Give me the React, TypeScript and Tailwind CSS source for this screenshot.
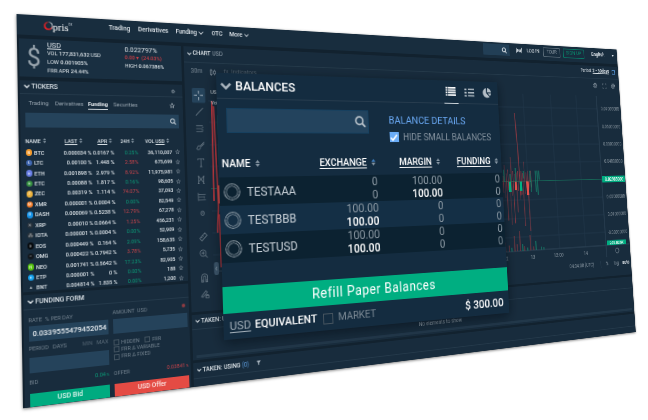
import React from "react";

type Pt = [number, number];

/* Projects a w x h box onto an arbitrary quad (top-left, top-right, bottom-right, bottom-left). */
function project(w: number, h: number, [p0, p1, p2, p3]: Pt[]) {
  const dx1 = p1[0] - p2[0], dx2 = p3[0] - p2[0], sx = p0[0] - p1[0] + p2[0] - p3[0];
  const dy1 = p1[1] - p2[1], dy2 = p3[1] - p2[1], sy = p0[1] - p1[1] + p2[1] - p3[1];
  const den = dx1 * dy2 - dx2 * dy1;
  const g = (sx * dy2 - dx2 * sy) / den;
  const k = (dx1 * sy - sx * dy1) / den;
  const a = p1[0] - p0[0] + g * p1[0], b = p3[0] - p0[0] + k * p3[0];
  const d = p1[1] - p0[1] + g * p1[1], e = p3[1] - p0[1] + k * p3[1];
  const m = [a / w, d / w, 0, g / w, b / h, e / h, 0, k / h, 0, 0, 1, 0, p0[0], p0[1], 0, 1];
  return { transform: `matrix3d(${m.map((n) => n.toFixed(9)).join(",")})` };
}

const BOARD: Pt[] = [[16.5, 14], [616.5, 49.5], [635.7, 332], [23, 408.3]];
const MODAL: Pt[] = [[216, 72.7], [497, 82.3], [509.3, 312.7], [224, 340.2]];

const Chevron = ({ className = "" }: { className?: string }) => (
  <svg viewBox="0 0 12 8" className={className} fill="none" stroke="currentColor" strokeWidth="2.6">
    <path d="M1 1.5 6 6.5 11 1.5" />
  </svg>
);

const Thin = () => (
  <svg viewBox="0 0 12 8" className="ml-[2px] h-[4px] w-[6px]" fill="none" stroke="currentColor" strokeWidth="1.8">
    <path d="M1 1.5 6 6.5 11 1.5" />
  </svg>
);

const Sort = ({ className = "h-[5px] w-[3.5px]", up = "currentColor" }: { className?: string; up?: string }) => (
  <svg viewBox="0 0 8 12" className={`shrink-0 text-[#8797a4] ${className}`}>
    <path d="M4 0 8 5H0Z" fill={up} />
    <path d="M4 12 0 7h8Z" fill="currentColor" />
  </svg>
);

const Search = ({ className = "" }: { className?: string }) => (
  <svg viewBox="0 0 12 12" className={className} fill="none" stroke="currentColor" strokeWidth="1.7">
    <circle cx="5" cy="5" r="3.9" />
    <path d="m8 8 3.4 3.4" strokeWidth="2" />
  </svg>
);

const Star = ({ className = "" }: { className?: string }) => (
  <svg viewBox="0 0 12 12" className={className} fill="none" stroke="currentColor" strokeWidth="1.1">
    <path d="m6 1 1.5 3.3 3.5.4-2.6 2.4.7 3.6L6 8.9l-3.1 1.8.7-3.6L1 4.7l3.5-.4Z" />
  </svg>
);

const Gear = ({ className = "" }: { className?: string }) => (
  <svg viewBox="0 0 12 12" className={className} fill="none" stroke="currentColor">
    <circle cx="6" cy="6" r="4.2" strokeWidth="1.4" strokeDasharray="2.2 1.1" />
    <circle cx="6" cy="6" r="2.3" strokeWidth="1.5" />
  </svg>
);

const coins = [
  { n: "BTC", last: "0.000034", apr: "0.0167", h: "0.25%", up: true, vol: "36,110,007", c: "#f39a2d", s: "B" },
  { n: "LTC", last: "0.00100", apr: "1.448", h: "2.58%", up: false, vol: "675,699", c: "#3f66b0", s: "Ł" },
  { n: "ETH", last: "0.001898", apr: "2.979", h: "8.92%", up: false, vol: "11,975,981", c: "#6a7fe6", s: "♦" },
  { n: "ETC", last: "0.00088", apr: "1.817", h: "0.16%", up: true, vol: "98,605", c: "#3a9544", s: "♦" },
  { n: "ZEC", last: "0.00319", apr: "1.114", h: "74.07%", up: false, vol: "37,093", c: "#eeb33c", s: "Z" },
  { n: "XMR", last: "0.000001", apr: "0.0004", h: "0.00%", up: true, vol: "82,549", c: "#f57a24", s: "M" },
  { n: "DASH", last: "0.000069", apr: "0.5238", h: "12.79%", up: false, vol: "67,278", c: "#1591e6", s: "D" },
  { n: "XRP", last: "0.00010", apr: "0.0664", h: "1.25%", up: false, vol: "456,231", c: "#25303a", s: "✕" },
  { n: "IOTA", last: "0.000001", apr: "0.0004", h: "0.00%", up: true, vol: "52,909", c: "#2a343c", s: "⁂" },
  { n: "EOS", last: "0.000449", apr: "0.164", h: "2.09%", up: true, vol: "158,635", c: "#06090c", s: "◊" },
  { n: "OMG", last: "0.000422", apr: "0.7942", h: "3.78%", up: false, vol: "5,735", c: "#11161b", s: "–" },
  { n: "NEO", last: "0.001741", apr: "0.5642", h: "17.23%", up: true, vol: "82,905", c: "#57c40f", s: "N" },
  { n: "ETP", last: "0.000001", apr: "0", h: "0.00%", up: true, vol: "188", c: "#15a3f0", s: "●" },
  { n: "BNT", last: "0.004814", apr: "1.835", h: "0.00%", up: true, vol: "1,200", c: "#182c3d", s: "▲" },
];

function TopBar() {
  return (
    <header className="flex h-[21px] shrink-0 items-center bg-[#182d3e] pb-[3px] text-[6.900px] font-medium text-[#dfe5ea]">
      <div className="ml-[27px] flex w-[68px] items-center pt-[3px]">
        <svg viewBox="0 0 16 16" className="h-[9.5px] w-[9px]">
          <path d="M8 .8a7.2 7.2 0 1 0 7.2 7.4A6.2 6.2 0 1 1 8 .8Z" fill="#e32227" stroke="#e32227" strokeWidth=".8" />
          <path d="M8 .8a7.2 7.2 0 0 1 7.2 7.2c0 2.6-1.200 4.600-3 5.900A6.600 6.600 0 0 0 8 .8Z" fill="#e9edf0" />
        </svg>
        <span className="font-['Liberation_Serif',serif] text-[11px] leading-[10px] text-white">pris</span>
        <span className="mb-[5px] text-[3px] leading-[3px] text-[#aeb9c2]">DX</span>
      </div>
      <span className="w-[32px]">Trading</span>
      <span className="w-[42.5px]">Derivatives</span>
      <span className="flex w-[42px] items-center">Funding<Thin /></span>
      <span className="w-[21.500px]">OTC</span>
      <span className="flex items-center">More<Thin /></span>
      <div className="ml-auto mt-[1px] flex h-[15px] w-[43px] items-center justify-end bg-[#223f56] pr-[4px]">
        <Search className="h-[8px] w-[9px] text-[#c8d1d8]" />
      </div>
      <svg viewBox="0 0 14 10" className="ml-[10px] h-[8px] w-[12px]" fill="none" stroke="#c8d1d8" strokeWidth="1.4">
        <path d="M1.500 1v8M4 2.500v5M4 4h2v3M8 3v4h2V3M12.500 1v8" />
      </svg>
      <span className="ml-[7px] w-[28px] whitespace-nowrap text-[7px] font-normal">LOG IN</span>
      <span className="flex h-[13px] w-[30px] items-center justify-center rounded-[1px] border border-[#5b6c79] text-[7px] font-normal text-[#93a0ab]">TOUR</span>
      <span className="ml-[5px] flex h-[13px] w-[38px] items-center justify-center rounded-[1px] border border-[#087a65] text-[7.200px] font-normal text-[#078a6c]">SIGN UP</span>
      <span className="ml-[13px] w-[38px] text-[7.500px] font-medium">English</span>
      <span className="mr-[6px] border-x-[2.500px] border-t-[3px] border-x-transparent border-t-[#dfe5ea]" />
    </header>
  );
}

function Summary() {
  return (
    <section className="flex h-[39.500px] shrink-0 bg-[#192f41] text-[5.700px] font-medium leading-[9.300px] text-[#d9e0e5]">
      <div className="ml-[8px] flex w-[20.500px] items-center text-[25px] font-normal text-[#99a5ae]">$</div>
      <div className="w-[81.500px] pt-[1px]">
        <div className="text-[7.500px] font-normal underline">USD</div>
        <div><span className="font-normal">VOL</span> 177,831,632 <span className="font-normal">USD</span></div>
        <div><span className="font-normal">LOW</span> 0.001905%</div>
        <div><span className="font-normal">FRR APR</span> 24.44%</div>
      </div>
      <div className="pt-[2px]">
        <div className="text-[7.300px] font-normal">0.022797%</div>
        <div className="font-medium text-[#cf3f46]">0.00 ▾ &nbsp;(24.03%)</div>
        <div><span className="font-normal">HIGH</span> 0.067386%</div>
      </div>
    </section>
  );
}

function Tickers() {
  const cols = "grid grid-cols-[13.500px_58.500px_24px_26px_38px_13px] items-center";
  return (
    <section className="flex h-[213px] shrink-0 flex-col overflow-hidden bg-[#182c3d] text-[5.500px] text-[#dbe2e7]">
      <div className="flex h-[14.500px] shrink-0 items-center border-b border-[#24394a] px-[4px] text-[6.700px] font-medium">
        <Chevron className="mr-[2px] h-[4px] w-[6px]" />
        TICKERS
        <Gear className="ml-auto mr-[4px] mt-[2px] h-[5px] w-[5px] text-[#9aa7b1]" />
      </div>
      <div className="flex h-[16px] shrink-0 items-center pl-[9px] pt-[1px] text-[6px] text-[#98a5b0]">
        <span className="w-[26.500px]">Trading</span>
        <span className="w-[34px]">Derivatives</span>
        <span className="mr-[6px] border-b border-[#cdd5db] pb-[1.500px] pt-[2.500px] text-[5.800px] font-bold leading-[8px] text-[#e6ebef]">Funding</span>
        <span>Securities</span>
        <Star className="ml-auto mr-[9px] h-[6px] w-[6px] text-[#b9c3cb]" />
      </div>
      <div className="mx-[5px] mt-[3px] flex h-[15px] shrink-0 items-center justify-end bg-[#25435b] pr-[3px]">
        <Search className="h-[7px] w-[7px] text-[#c8d1d8]" />
      </div>
      <div className="flex h-[20.500px] shrink-0 items-end pb-[2.500px] pl-[5px] text-[5.400px] font-medium">
        <span className="flex w-[39.500px] items-center gap-[2px]">NAME <Sort /></span>
        <span className="flex w-[34px] items-center gap-[2px]"><u>LAST</u> <Sort /></span>
        <span className="flex w-[24.500px] items-center gap-[2px]"><u>APR</u> <Sort /></span>
        <span className="flex w-[27px] items-center gap-[2px]">24H <Sort /></span>
        <span className="flex items-center gap-[2px]"><span>VOL <u>USD</u></span> <Sort /></span>
      </div>
      <div className="flex min-h-0 flex-1">
        <div className="flex-1">
          {coins.map((r) => (
            <div key={r.n} className={`${cols} h-[10.450px] text-right font-medium leading-[10px]`}>
              <span className="ml-[5px] flex h-[6.500px] w-[6.500px] items-center justify-center rounded-full text-[4px] leading-none text-white/80" style={{ background: r.c }}>{r.s}</span>
              <div className="flex justify-between"><span>{r.n}</span><span>{r.last} %</span></div>
              <span className="whitespace-nowrap">{r.apr} %</span>
              <span className={r.up ? "font-normal text-[#0b9c78]" : "font-normal text-[#c9444b]"}>{r.h}</span>
              <span>{r.vol}</span>
              <Star className="ml-[3.500px] h-[5px] w-[5px] text-[#8b98a3]" />
            </div>
          ))}
        </div>
        <div className="mr-[1px] h-[35px] w-[2px] rounded bg-[#3b4f60]" />
      </div>
    </section>
  );
}

const Box = () => <span className="mr-[2.500px] h-[6px] w-[6px] border border-[#41525f]" />;

function FundingForm() {
  return (
    <section className="flex min-h-0 flex-1 flex-col bg-[#182c3d] text-[5.700px] text-[#71808d]">
      <div className="flex h-[15px] shrink-0 items-center border-b border-[#24394a] px-[4px] text-[6.800px] font-medium text-[#dbe2e7]">
        <Chevron className="mr-[2px] h-[4px] w-[6px]" />
        FUNDING FORM
      </div>
      <div className="grid grid-cols-[80px_81px] gap-x-[5px] pl-[5px]">
        <div className="h-[16px] pt-[6.500px] leading-[7px]">RATE &nbsp;% PER DAY</div>
        <div className="flex h-[16px] justify-between pt-[6px] leading-[7px]"><span>AMOUNT &nbsp;USD</span><span className="mr-[2px] h-[4px] w-[4px] rounded-full bg-[#8d3b42]" /></div>
        <div className="flex h-[15px] items-center bg-[#25435b] pl-[4px] text-[7.500px] font-medium text-[#e8edf1]">0.0339555479452054</div>
        <div className="h-[15px] bg-[#25435b]" />
        <div>
          <div className="flex h-[15.500px] items-center gap-[4px]"><span>PERIOD</span><span>DAYS</span><span className="ml-auto text-[#4f606e]">MIN</span><span className="text-[#5a6b79]">MAX</span></div>
          <div className="h-[15px] bg-[#25435b]" />
        </div>
        <div className="pt-[5.500px] text-[5.500px] leading-[7.200px]">
          <div className="flex items-center"><Box />HIDDEN<span className="w-[5px]" /><Box />FRR</div>
          <div className="flex items-center"><Box />FRR Δ VARIABLE</div>
          <div className="flex items-center"><Box />FRR Δ FIXED</div>
        </div>
        <div className="flex h-[20px] items-center justify-between"><span>BID</span><span className="text-[#0b9c78]">0.04<span className="text-[3.500px]"> %</span></span></div>
        <div className="flex h-[20px] items-center justify-between"><span>OFFER</span><span className="text-[#c9444b]">0.03841<span className="text-[3.500px]"> %</span></span></div>
        <div className="flex h-[15px] items-center justify-center bg-[#00ab80] pb-[2px] text-[7px] font-medium text-[#e2f6ef]">USD Bid</div>
        <div className="flex h-[15px] items-center justify-center bg-[#e44b44] pb-[2px] text-[7px] font-medium text-[#fbe6e4]">USD Offer</div>
      </div>
    </section>
  );
}

const prices = ["0.07000000", "0.06000000", "0.05000000", "0.04000000", "", "0.02000000", "0.01000000", "-0.00000000"];
const dips = [190, 214, 196, 203, 232, 193, 238, 200, 236, 190, 222, 194, 206, 199, 240, 198, 190, 247, 194, 190];
const peaks = [172, 168, 174, 160, 171, 166, 172, 150, 168, 172, 170, 168, 173, 168, 171, 156, 170, 168, 172, 168];

function PriceChart() {
  return (
    <svg viewBox="204 62 618 226" className="h-[226px] w-[618px] shrink-0" fontFamily="Roboto, sans-serif">
      <g stroke="#20364a" strokeWidth="1">
        {[603, 648, 695, 740].map((x) => <path key={x} d={`M${x} 66V272`} />)}
        {[84, 108, 133, 157, 206, 230, 254].map((y) => <path key={y} d={`M204 ${y}H777`} />)}
      </g>
      <path d="M777 66V288M204 272H822" stroke="#30475a" fill="none" />
      <path d="M204 181.500H777" stroke="#176456" strokeWidth="1" />
      <g fill="none" stroke="#963a43" strokeWidth="1">
        {dips.map((y, i) => <path key={i} d={`M${602 + i * 2.700} ${peaks[i]}V${y}`} opacity={i % 3 ? 0.9 : 0.55} />)}
        <path d="M632 92 634 140 635 200" strokeWidth="1.400" opacity=".9" />
        <path d="M208 84 207 195M210 90 212 200 210 230M213 268V210" strokeWidth="1.700" stroke="#c6393f" />
        <path d="M605 272v-12M611 272v-8M620 272v-20M624 272v-9M629 272v-26M636 272v-6M646 272v-20M651 272v-5" />
      </g>
      <g stroke="#16836b" strokeWidth="1.300">
        <path d="M609 166v16M619 172v12M628 164v20M641 168v10M652 168v15M661 168v17M664 168v16M667 168v12M661 182v14M664 182v18M653 182v14M215 100v95" />
        <path d="M615 272v-5M633 272v-9M641 272v-4M655 272v-12M664 272v-4M668 272v-3" />
      </g>
      <path d="M616 182h4v13h-4ZM634 182h4v12h-4Z" fill="#00b383" />
      <path d="M626 182h3v11h-3ZM645 182h4v18h-4Z" fill="#e2504b" />
      <path d="M212 178h3v20h-3Z" fill="#e2504b" />
      <g fill="#85929c" fontSize="6.400">
        {prices.map((p, i) => <text key={i} x={i === 7 ? 782 : 784} y={86.500 + i * 24.300}>{p}</text>)}
        <g fontSize="6.800"><text x="645" y="283.500">13</text><text x="684" y="283.500">12:00</text><text x="736" y="283.500">14</text><text x="601" y="283.500">12</text></g>
      </g>
      <rect x="778" y="177" width="42" height="9" fill="#00ab80" />
      <text x="783" y="184" fontSize="6.400" fontWeight="500" fill="#fff">0.02985000</text>
      <rect x="779" y="265.500" width="35" height="6.500" fill="#00ab80" />
      <text x="784" y="271.500" fontSize="6" fontWeight="500" fill="#fff">201.826K</text>
      <circle cx="797" cy="280" r="3.200" fill="none" stroke="#7b8994" strokeWidth=".9" />
      <g fill="#dbe2e7" fontSize="6"><text x="207" y="76">USD</text><text x="207" y="88">Vol</text></g>
      <rect x="204.500" y="262" width="5.500" height="14" rx="2" fill="#3d566b" />
      <path d="m208 267-1.500 2 1.500 2" fill="none" stroke="#aab6c0" strokeWidth=".7" />
    </svg>
  );
}

const tools: [number, string][] = [
  [96.2, "M2.5 9.5 9.5 2.5M1 11l1.500-1.500M9.500 2.500 11 1"],
  [115, "M1 2h9M1 6h9M1 10h9M9 4h2M8 8h3"],
  [134, "M1 10c3 2 6-1 5-3L5 6C3 5 1 8 1 10ZM6 6l5-5M7 7l4-4"],
  [152.5, "M2 3V1h8v2M6 1v10M4.500 11h3"],
  [171, "M2 11V2l7 8M2 9 9 2M9 2v9M1 2h2M8 2h2M1 11h2M8 11h2"],
  [190, "M1 1v10M1 3h10M1 6h7M1 10h10M9 5v3"],
  [208, "M6 3.500a2.500 2.500 0 1 0 .01 0M6 5v2"],
  [233.7, "M1 8 8 1l3 3-7 7ZM5 4l1.500 1.500M3 6l1.500 1.500"],
  [252, "M5 1a4 4 0 1 0 .01 0M8 8l3 3M3 5h4M5 3v4"],
  [278, "M2 11V5a4 4 0 0 1 8 0v6H7.500V5a1.500 1.500 0 0 0-3 0v6ZM2 9h2.500M7.500 9H10"],
  [295.4, "M1 9 7 2l2 2-6 6ZM7 8h4v3H7ZM8 8V7h2v1"],
];

function ChartPanel() {
  return (
    <section className="flex h-[290.500px] shrink-0 flex-col bg-[#182c3d] text-[#dbe2e7]">
      <div className="flex h-[18px] shrink-0 items-center border-b border-[#24394a] px-[4px] text-[6.500px] font-medium">
        <Chevron className="mr-[2px] h-[4px] w-[5px]" />
        CHART <span className="ml-[2px] font-normal text-[#93a1ac]">USD</span>
        <span className="ml-auto text-[6.500px] font-normal">Period: <b className="underline">2 - 30days</b></span>
        <span className="ml-[5px] mr-[2px] h-[6px] w-[6px] border border-[#5c9de0]" />
      </div>
      <div className="flex h-[20px] shrink-0 items-center pl-[8px] text-[7px] text-[#7c8a96]">
        <span className="w-[22px]">30m</span>
        <svg viewBox="0 0 10 10" className="h-[8px] w-[8px]" fill="none" stroke="currentColor"><path d="M2 0v2M2 8v2M.7 2h2.600v6H.7ZM7 1v2M7 7v2M5.700 3h2.600v4H5.700Z" /></svg>
        <span className="ml-[9px] text-[#52626f]">ƒx &nbsp;Indicators</span>
        <Gear className="ml-auto h-[9px] w-[9px]" />
        <svg viewBox="0 0 10 10" className="ml-[8px] h-[8px] w-[9px]" fill="none" stroke="currentColor"><path d="M1 3V1h2M7 1h2v2M9 7v2H7M3 9H1V7" /></svg>
        <Gear className="ml-[7px] mr-[7px] h-[9px] w-[9px]" />
      </div>
      <div className="flex min-h-0 flex-1">
        <div className="w-[27px] shrink-0 text-[#62727f]">
          <svg viewBox="177 62 27 245" className="h-[245px] w-[27px]" fill="none" stroke="currentColor" strokeWidth="1">
            <rect x="185" y="70" width="15.500" height="16.500" rx="1.500" fill="#25435b" stroke="none" />
            <path d="M192.700 73v3.500M192.700 80v3.500M187.500 78.200h3.500M194.500 78.200h3.500" stroke="#a7b5c0" />
            {tools.map(([y, d]) => (
              <g key={y} transform={`translate(188 ${y - 5}) scale(.86)`}><path d={d} /></g>
            ))}
          </svg>
        </div>
        <div className="flex min-w-0 flex-1 flex-col">
          <PriceChart />
          <div className="flex h-[20px] items-center justify-end pr-[3px] text-[6.500px] text-[#8b98a3]">
            <span className="mr-[12px]">04:04:08 (UTC)</span>
            <span className="mr-[10px] border-l border-[#2a4053] pl-[8px]">%</span>
            <span className="mr-[7px]">log</span>
            <b className="text-[#e5eaee]">auto</b>
          </div>
        </div>
      </div>
    </section>
  );
}

function Dashboard() {
  return (
    <div className="absolute left-0 top-0 flex h-[394px] w-[822px] origin-top-left flex-col overflow-hidden bg-[#12222f] shadow-[0_1px_3px_rgba(0,0,0,0.5)]" style={project(822, 394, BOARD)}>
      <TopBar />
      <main className="mt-[3.500px] flex min-h-0 flex-1">
        <aside className="ml-[1.500px] mr-[2.500px] flex w-[173.500px] shrink-0 flex-col gap-[3.500px]">
          <Summary />
          <Tickers />
          <FundingForm />
        </aside>
        <div className="flex min-w-0 flex-1 flex-col gap-[3px]">
          <ChartPanel />
          <section className="flex h-[47.500px] shrink-0 flex-col bg-[#182c3d] text-[#dbe2e7]">
            <div className="flex h-[15.500px] shrink-0 items-center border-b border-[#24394a] px-[4px] text-[6.700px] font-medium">
              <Chevron className="mr-[2px] h-[4px] w-[5px]" />TAKEN: UNUSED
            </div>
            <div className="flex flex-1 items-end justify-center pb-[4px] text-[6.800px] leading-[8px] text-[#98a5af]">No elements to show</div>
            <div className="mx-[4px] mb-[2px] h-[2.500px] bg-[#22384a]" />
          </section>
          <section className="min-h-0 flex-1 bg-[#182c3d]">
            <div className="flex h-[17.500px] items-center border-b border-[#24394a] px-[4px] text-[6.700px] font-medium text-[#dbe2e7]">
              <Chevron className="mr-[2px] h-[4px] w-[5px]" />TAKEN: USING <span className="ml-[2px] font-normal text-[#5f9fe0]">(0)</span>
              <svg viewBox="0 0 8 8" className="ml-[9px] h-[5px] w-[5px]"><path d="M0 0h8L5 4v4L3 7V4Z" fill="#a9b5bf" /></svg>
            </div>
          </section>
        </div>
      </main>
    </div>
  );
}

const balances = [
  { n: "TESTAAA", ex: ["0", "0"], ma: ["100.00", "100.00"], dark: true },
  { n: "TESTBBB", ex: ["100.00", "100.00"], ma: ["0", "0"], dark: false },
  { n: "TESTUSD", ex: ["100.00", "100.00"], ma: ["0", "0"], dark: true },
];

const Pair = ({ v }: { v: string[] }) => (
  <div className="pt-[1px] text-right leading-[13.500px] text-[#8d9aa4]">
    <div>{v[0]}</div>
    <div className={v[1] === "0" ? "" : "font-medium text-white"}>{v[1]}</div>
  </div>
);

const ListIcon = ({ dense }: { dense?: boolean }) => (
  <svg viewBox="0 0 14 11" className={`h-[10px] w-[13.500px] ${dense ? "text-white" : "text-[#b4bec6]"}`} fill="currentColor">
    {dense
      ? [0, 3, 6, 9].map((y) => <path key={y} d={`M0 ${y}h2.200v2H0ZM3 ${y}h11v2H3Z`} />)
      : [0.5, 4.5, 8.5].map((y) => <path key={y} d={`M0 ${y}h3v2H0ZM5 ${y}h9v1.800H5Z`} />)}
  </svg>
);

function Balances() {
  return (
    <div className="absolute left-0 top-0 flex h-[262px] w-[326px] origin-top-left flex-col bg-[#142c40] text-[12px] text-[#c9d1d8] shadow-[0_3px_12px_rgba(3,12,20,0.6)]" style={project(326, 262, MODAL)}>
      <div className="flex h-[26px] shrink-0 items-center border-b border-[#273c4e] pl-[4px] text-[12.500px] font-medium text-white">
        <Chevron className="mr-[4px] h-[8px] w-[11px] text-[#a9b4bd]" />
        <span className="pt-[1px]">BALANCES</span>
        <div className="ml-auto mr-[8px] flex h-[27px] items-center gap-[8px]">
          <span className="flex h-full w-[18px] items-center justify-center border-b border-[#d9dfe4]"><ListIcon dense /></span>
          <ListIcon />
          <svg viewBox="0 0 14 14" className="ml-[2px] h-[13px] w-[13px]" fill="#b4bec6">
            <path d="M6.200 1.200V7.600l4.600 4.400A6 6 0 1 1 6.200 1.200Z" />
            <path d="M7.600 1a6 6 0 0 1 5.400 5.400H7.600ZM8.200 7.800h4.800a6 6 0 0 1-1.500 3.300Z" />
          </svg>
        </div>
      </div>
      <div className="flex h-[50px] shrink-0 pl-[8.500px] pt-[9px]">
        <div className="flex h-[25px] w-[154.500px] items-center justify-end border border-[#16405f] bg-[#23435d] pr-[2.500px]">
          <Search className="h-[12.500px] w-[12.500px] text-[#b9c3cb]" />
        </div>
        <div className="ml-[23.500px] pt-[4px]">
          <div className="text-[11.200px] leading-[14px] text-[#6aa9f4]">BALANCE DETAILS</div>
          <div className="mt-[4.500px] flex items-center text-[10.200px] leading-[12px] text-[#8794a0]">
            <span className="mr-[5px] flex h-[11.500px] w-[11.500px] items-center justify-center bg-[#6aadf8]">
              <svg viewBox="0 0 12 12" className="h-[10px] w-[10px]" fill="none" stroke="#fff" strokeWidth="2"><path d="m1.500 6.500 3 3 6-7" /></svg>
            </span>
            <span>HIDE SMALL BALANCES</span>
          </div>
        </div>
      </div>
      <div className="flex h-[28px] shrink-0 items-center pl-[3px] text-[10.300px] font-medium text-white">
        <span className="flex w-[102.500px] items-center gap-[5px]"><span className="pt-[1px]">NAME</span><Sort className="h-[7px] w-[5px]" /></span>
        <span className="flex w-[91.500px] items-center gap-[5px]"><u className="pt-[1px] underline-offset-2">EXCHANGE</u><Sort className="h-[7px] w-[5px]" up="#3f7fc0" /></span>
        <span className="flex w-[71px] items-center gap-[5px]"><u className="pt-[1px] underline-offset-2">MARGIN</u><Sort className="h-[7px] w-[5px]" /></span>
        <span className="flex items-center gap-[5px]"><u className="pt-[1px] underline-offset-2">FUNDING</u><Sort className="h-[7px] w-[5px]" /></span>
      </div>
      {balances.map((b) => (
        <div key={b.n} className={`grid h-[28px] shrink-0 grid-cols-[27.500px_72.500px_70.500px_78px_74.500px] items-center ${b.dark ? "bg-[#0c2231]" : "bg-[#142f45]"}`}>
          <svg viewBox="0 0 18 18" className="ml-[3.500px] h-[17px] w-[17px]" fill="none" stroke="#a5b0b8">
            <circle cx="9" cy="9" r="8.300" strokeWidth=".8" />
            <circle cx="9" cy="9" r="7.200" strokeWidth="1" strokeDasharray=".7 2.100" opacity=".35" />
            <circle cx="9" cy="9" r="6" strokeWidth=".6" />
          </svg>
          <span className="pt-[1px]">{b.n}</span>
          <Pair v={b.ex} />
          <Pair v={b.ma} />
          <Pair v={["0", "0"]} />
        </div>
      ))}
      <div className="mt-[22.500px] flex h-[26.500px] shrink-0 items-center justify-center bg-[#00ae81] pt-[1px] text-[13.800px] tracking-[0.600px] text-white">
        Refill Paper Balances
      </div>
      <div className="flex flex-1 items-center pl-[6px] pr-[7px] pt-[1px] text-[11.200px]">
        <span className="mr-[4px] text-[#a1adb7] underline underline-offset-2">USD</span>
        <span className="text-[11.100px] font-medium text-white">EQUIVALENT</span>
        <span className="ml-[7px] mr-[5px] h-[11px] w-[11px] border border-[#46545f]" />
        <span className="text-[10.800px] text-[#7d8a95]">MARKET</span>
        <span className="ml-auto text-[12.500px] font-medium text-white">$ 300.00</span>
      </div>
    </div>
  );
}

export default function App() {
  return (
    <div className="relative h-[420px] w-[648px] overflow-hidden bg-white font-['Roboto',sans-serif]">
      <Dashboard />
      <Balances />
    </div>
  );
}
